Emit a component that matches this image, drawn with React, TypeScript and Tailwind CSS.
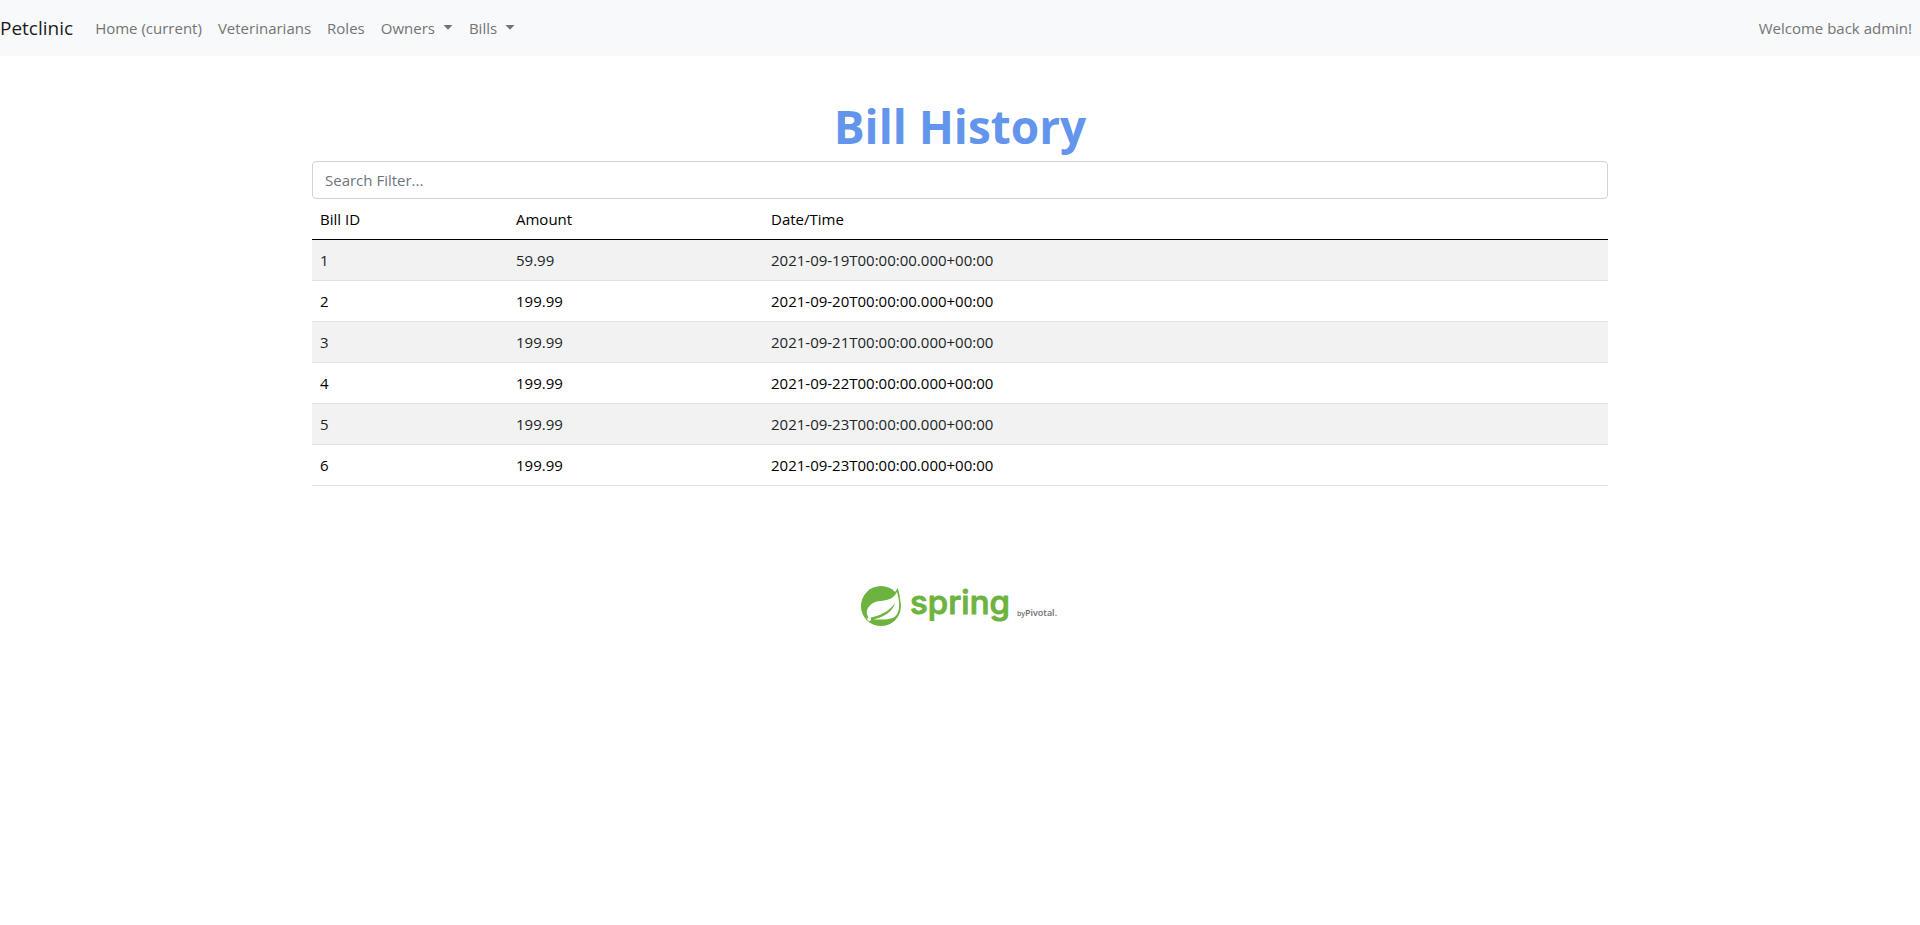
import { useState } from "react";

const bills = [
  { id: 1, amount: "59.99", date: "2021-09-19T00:00:00.000+00:00" },
  { id: 2, amount: "199.99", date: "2021-09-20T00:00:00.000+00:00" },
  { id: 3, amount: "199.99", date: "2021-09-21T00:00:00.000+00:00" },
  { id: 4, amount: "199.99", date: "2021-09-22T00:00:00.000+00:00" },
  { id: 5, amount: "199.99", date: "2021-09-23T00:00:00.000+00:00" },
  { id: 6, amount: "199.99", date: "2021-09-23T00:00:00.000+00:00" },
];

function Caret() {
  return (
    <svg width="10" height="5" viewBox="0 0 10 5" className="mb-px" aria-hidden="true">
      <path d="M0.5 0h9L5 4.8z" fill="currentColor" />
    </svg>
  );
}

function Navbar() {
  return (
    <nav className="flex h-14 items-center bg-[#f8f9fa] text-[15px] text-[#737475]">
      <a href="#home" className="mr-3.5 text-[19px] text-[#1b1c1d]">
        Petclinic
      </a>
      <a href="#home" className="px-2">
        Home (current)
      </a>
      <a href="#vets" className="px-2">
        Veterinarians
      </a>
      <a href="#roles" className="px-2">
        Roles
      </a>
      <button type="button" className="flex items-center gap-2 px-2">
        Owners
        <Caret />
      </button>
      <button type="button" className="flex items-center gap-2 px-2">
        Bills
        <Caret />
      </button>
      <span className="ml-auto px-2">Welcome back admin!</span>
    </nav>
  );
}

function SpringLogo() {
  return (
    <svg width="200" height="50" viewBox="0 -6 200 50" role="img" aria-label="spring by Pivotal">
      <g transform="translate(-10.4 -10.6) scale(0.3333)">
        <circle cx="94" cy="95" r="60" fill="#6db33f" />
        <path d="M144 41C138 54 130 60 120 66L135 125C159 106 154 70 144 41Z" fill="#6db33f" />
        <path
          d="M142 52C136 66 126 73 114 76C94 81 76 78 61 93C48 107 49 123 60 130C88 125 118 113 137 85C128 112 106 127 72 135C98 135 126 138 139 124C153 106 150 80 142 52Z"
          fill="#fff"
        />
        <circle cx="59" cy="134" r="6" fill="#fff" />
      </g>
      <text
        x="50"
        y="29"
        fill="#6db33f"
        stroke="#6db33f"
        strokeWidth="1"
        strokeLinejoin="round"
        className="font-['Inter',sans-serif] text-[33px] leading-8 font-medium"
      >
        spring
      </text>
      <text x="157" y="31" fill="#6d6e71" className="font-['Open_Sans',sans-serif] text-[7px] leading-none font-semibold">
        by
      </text>
      <text x="165" y="31" fill="#6d6e71" className="font-['Open_Sans',sans-serif] text-[9px] leading-none font-semibold">
        Pivotal.
      </text>
    </svg>
  );
}

export default function App() {
  const [filter, setFilter] = useState("");
  const rows = bills.filter((b) => `${b.id} ${b.amount} ${b.date}`.includes(filter));

  return (
    <div className="min-h-screen bg-white font-['Open_Sans',sans-serif] text-[15px] leading-6 text-black">
      <Navbar />
      <main className="mx-auto max-w-[1320px] px-3 pt-10">
        <h1 className="pb-1 text-center text-[46px] leading-[61px] font-bold text-[#6495ed]">Bill History</h1>
        <input
          type="text"
          aria-label="Search Filter"
          placeholder="Search Filter..."
          value={filter}
          onChange={(e) => setFilter(e.target.value)}
          className="block h-[38px] w-full rounded border border-[#ced4da] px-3 placeholder:text-[#6c757d]"
        />
        <table className="w-full table-fixed border-collapse text-left">
          <thead>
            <tr className="h-10 border-b border-black">
              <th className="w-[196px] px-2 font-normal">Bill ID</th>
              <th className="w-[255px] px-2 font-normal">Amount</th>
              <th className="px-2 font-normal">Date/Time</th>
            </tr>
          </thead>
          <tbody>
            {rows.map((b) => (
              <tr
                key={b.id}
                className="h-[41px] border-b border-[#dee2e6] odd:bg-[#f2f2f2] odd:text-[#212529]"
              >
                <td className="px-2">{b.id}</td>
                <td className="px-2">{b.amount}</td>
                <td className="px-2">{b.date}</td>
              </tr>
            ))}
          </tbody>
        </table>
        <footer className="flex justify-center pt-[93px]">
          <SpringLogo />
        </footer>
      </main>
    </div>
  );
}
